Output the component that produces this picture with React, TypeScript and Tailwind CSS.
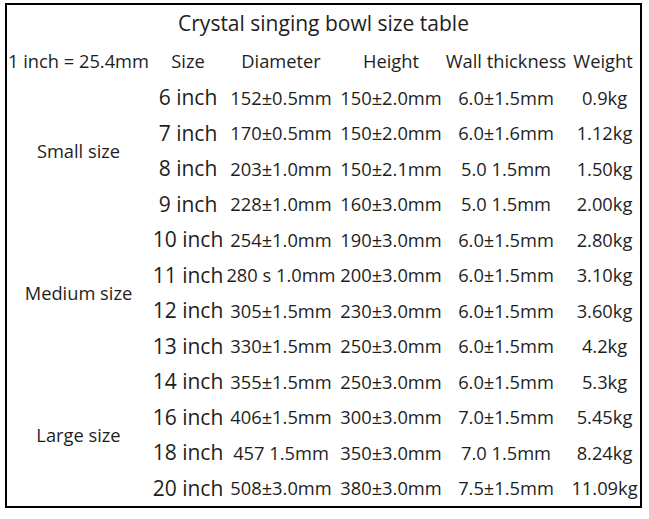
const rows: [string, string, string, string, string][] = [
  ['6 inch', '152±0.5mm', '150±2.0mm', '6.0±1.5mm', '0.9kg'],
  ['7 inch', '170±0.5mm', '150±2.0mm', '6.0±1.6mm', '1.12kg'],
  ['8 inch', '203±1.0mm', '150±2.1mm', '5.0 1.5mm', '1.50kg'],
  ['9 inch', '228±1.0mm', '160±3.0mm', '5.0 1.5mm', '2.00kg'],
  ['10 inch', '254±1.0mm', '190±3.0mm', '6.0±1.5mm', '2.80kg'],
  ['11 inch', '280 s 1.0mm', '200±3.0mm', '6.0±1.5mm', '3.10kg'],
  ['12 inch', '305±1.5mm', '230±3.0mm', '6.0±1.5mm', '3.60kg'],
  ['13 inch', '330±1.5mm', '250±3.0mm', '6.0±1.5mm', '4.2kg'],
  ['14 inch', '355±1.5mm', '250±3.0mm', '6.0±1.5mm', '5.3kg'],
  ['16 inch', '406±1.5mm', '300±3.0mm', '7.0±1.5mm', '5.45kg'],
  ['18 inch', '457 1.5mm', '350±3.0mm', '7.0 1.5mm', '8.24kg'],
  ['20 inch', '508±3.0mm', '380±3.0mm', '7.5±1.5mm', '11.09kg'],
];

const groups = [
  { label: 'Small size', pos: 'row-start-3' },
  { label: 'Medium size', pos: 'row-start-7' },
  { label: 'Large size', pos: 'row-start-11' },
];

const cell = 'flex items-center justify-center whitespace-nowrap';

export default function App() {
  return (
    <div className="w-[649px] h-[519px] bg-white pt-[3px] pl-[5px] font-['Open_Sans',sans-serif] text-[#1e1e1e]">
      <div className="w-[637px] border-2 border-black">
        <div className="grid grid-cols-[143px_76px_110px_110px_120px_74px] grid-rows-[37px_38px_repeat(12,35.5px)] text-[18.3px] leading-none">
          {/* title */}
          <div className={`col-span-6 text-[21px] ${cell}`}>Crystal singing bowl size table</div>

          {/* header */}
          <div className={cell}>1 inch = 25.4mm</div>
          <div className={cell}>Size</div>
          <div className={cell}>Diameter</div>
          <div className={cell}>Height</div>
          <div className={cell}>Wall thickness</div>
          <div className={cell}>Weight</div>

          {/* group labels */}
          {groups.map((g) => (
            <div key={g.label} className={`col-start-1 row-span-4 ${g.pos} ${cell}`}>
              {g.label}
            </div>
          ))}

          {rows.map((r, i) => (
            <div key={r[0]} className="contents">
              <div className={`col-start-2 text-[21px] ${cell}`} style={{ gridRowStart: i + 3 }}>
                {r[0]}
              </div>
              <div className={`col-start-3 ${cell}`} style={{ gridRowStart: i + 3 }}>
                {r[1]}
              </div>
              <div className={`col-start-4 ${cell}`} style={{ gridRowStart: i + 3 }}>
                {r[2]}
              </div>
              <div className={`col-start-5 ${cell}`} style={{ gridRowStart: i + 3 }}>
                {r[3]}
              </div>
              <div className={`col-start-6 pl-[3px] ${cell}`} style={{ gridRowStart: i + 3 }}>
                {r[4]}
              </div>
            </div>
          ))}
        </div>
      </div>
    </div>
  );
}
